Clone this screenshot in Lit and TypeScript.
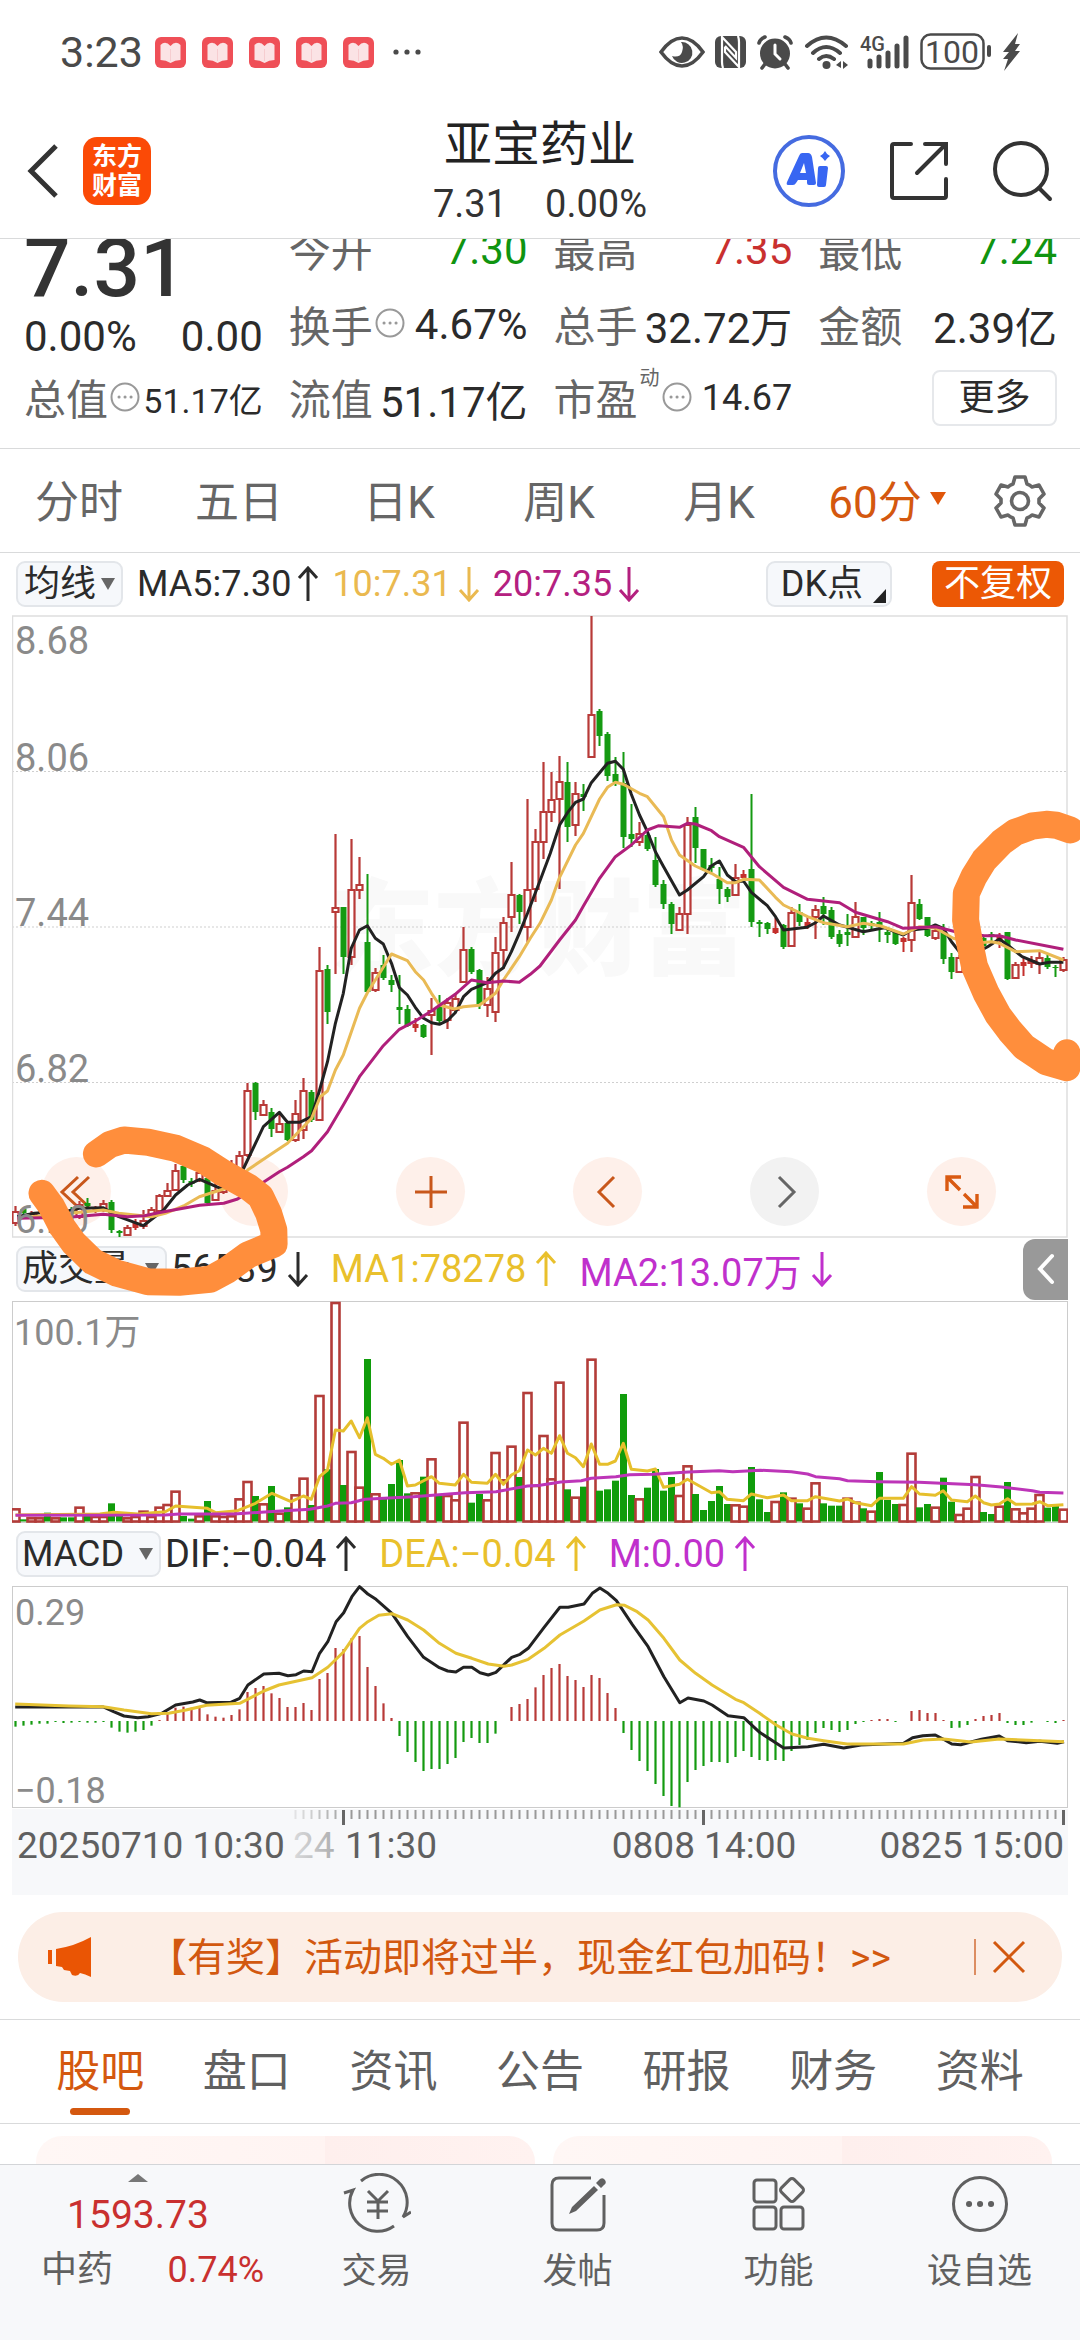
import { LitElement, html, svg, css } from "lit";
import { customElement } from "lit/decorators.js";
import { classMap } from "lit/directives/class-map.js";

type Bar = [string, number, number, number, number];

/* One candle per hour: direction (r up, g down, s up with a filled body), high, body top, body bottom, low. */
const CANDLES: Bar[] = [
  ["r", 1206, 1211, 1223, 1226], ["g", 1208, 1209, 1213, 1215], ["r", 1211, 1213, 1218, 1220], ["r", 1208, 1212, 1216, 1219],
  ["g", 1208, 1211, 1216, 1220], ["r", 1206, 1210, 1215, 1218], ["g", 1206, 1209, 1214, 1219], ["g", 1207, 1210, 1214, 1218],
  ["r", 1201, 1204, 1217, 1219], ["g", 1198, 1203, 1206, 1208], ["s", 1206, 1208, 1211, 1213], ["r", 1200, 1203, 1209, 1212],
  ["g", 1200, 1202, 1230, 1233], ["g", 1230, 1231, 1233, 1237], ["r", 1225, 1227, 1235, 1236], ["s", 1219, 1223, 1228, 1230],
  ["r", 1210, 1220, 1226, 1229], ["r", 1207, 1209, 1216, 1217], ["r", 1194, 1195, 1211, 1212], ["r", 1183, 1190, 1196, 1197],
  ["r", 1164, 1170, 1190, 1191], ["g", 1164, 1166, 1180, 1183], ["g", 1178, 1181, 1184, 1187], ["r", 1169, 1172, 1180, 1182],
  ["g", 1176, 1178, 1203, 1204], ["r", 1183, 1190, 1200, 1201], ["r", 1172, 1178, 1192, 1194], ["r", 1160, 1166, 1180, 1182],
  ["r", 1151, 1155, 1173, 1175], ["r", 1083, 1090, 1155, 1157], ["g", 1082, 1083, 1112, 1120], ["r", 1100, 1104, 1115, 1116],
  ["g", 1108, 1112, 1129, 1137], ["r", 1113, 1123, 1132, 1133], ["g", 1121, 1123, 1140, 1141], ["r", 1100, 1113, 1140, 1142],
  ["r", 1078, 1090, 1130, 1139], ["g", 1090, 1092, 1120, 1122], ["r", 947, 970, 1120, 1121], ["g", 965, 969, 1012, 1024],
  ["r", 834, 907, 912, 974], ["g", 907, 907, 957, 974], ["r", 839, 889, 957, 965], ["r", 857, 884, 890, 899],
  ["g", 874, 942, 992, 993], ["r", 968, 972, 990, 992], ["g", 955, 965, 978, 980], ["g", 975, 980, 985, 992],
  ["g", 975, 1007, 1010, 1024], ["g", 1005, 1009, 1026, 1027], ["s", 1018, 1024, 1028, 1032], ["g", 1024, 1025, 1037, 1038],
  ["r", 998, 1010, 1015, 1055], ["g", 995, 1007, 1021, 1024], ["r", 998, 1002, 1020, 1029], ["r", 995, 998, 1010, 1012],
  ["r", 927, 949, 982, 983], ["g", 947, 949, 972, 974], ["g", 969, 970, 1004, 1009], ["r", 977, 988, 1005, 1017],
  ["r", 937, 952, 1012, 1022], ["r", 917, 922, 950, 969], ["r", 862, 894, 917, 932], ["g", 894, 895, 912, 924],
  ["r", 799, 889, 927, 942], ["r", 829, 841, 889, 902], ["r", 762, 811, 842, 859], ["r", 772, 799, 812, 822],
  ["r", 756, 781, 799, 889], ["g", 762, 782, 827, 842], ["r", 782, 793, 825, 836], ["g", 784, 794, 797, 811],
  ["r", 616, 714, 757, 758], ["g", 709, 711, 736, 746], ["g", 732, 734, 776, 781], ["g", 757, 774, 782, 786],
  ["g", 752, 783, 837, 848], ["g", 804, 834, 839, 847], ["r", 822, 833, 842, 846], ["g", 834, 835, 849, 851],
  ["g", 837, 860, 885, 887], ["g", 880, 884, 904, 909], ["g", 902, 904, 924, 934], ["r", 907, 913, 930, 931],
  ["r", 817, 824, 914, 934], ["g", 807, 817, 848, 863], ["g", 849, 849, 870, 871], ["g", 858, 865, 868, 872],
  ["g", 867, 879, 889, 904], ["g", 887, 889, 897, 902], ["r", 864, 877, 895, 896], ["s", 870, 874, 878, 879],
  ["g", 794, 869, 922, 927], ["g", 920, 922, 924, 937], ["g", 922, 923, 929, 934], ["s", 918, 928, 933, 934],
  ["g", 924, 925, 947, 949], ["r", 907, 912, 946, 947], ["g", 904, 912, 922, 926], ["s", 917, 922, 927, 929],
  ["r", 905, 909, 917, 939], ["g", 897, 906, 914, 925], ["g", 907, 910, 937, 939], ["g", 930, 934, 944, 947],
  ["g", 914, 932, 935, 946], ["r", 902, 916, 937, 938], ["g", 917, 917, 928, 935], ["g", 921, 923, 926, 929],
  ["g", 912, 922, 927, 942], ["g", 928, 932, 935, 943], ["g", 931, 932, 944, 945], ["s", 937, 938, 942, 952],
  ["r", 875, 902, 940, 952], ["g", 899, 904, 919, 920], ["g", 917, 917, 936, 937], ["r", 927, 930, 938, 940],
  ["g", 924, 932, 959, 964], ["g", 953, 957, 972, 979], ["r", 955, 957, 972, 973], ["r", 948, 952, 962, 966],
  ["r", 938, 942, 952, 956], ["g", 935, 938, 946, 950], ["g", 932, 934, 937, 944], ["s", 933, 936, 940, 948],
  ["g", 932, 932, 979, 980], ["r", 962, 964, 978, 979], ["s", 958, 962, 966, 976], ["r", 956, 960, 963, 968],
  ["r", 952, 957, 964, 974], ["g", 955, 958, 967, 969], ["g", 965, 967, 968, 977], ["r", 957, 959, 970, 972],
];

/* Volume bars: direction and depth of the bar's top below the panel, in thirds of a unit. */
const VOLUME =
  "r805 g838 r832 r832 g818 r832 g832 g832 r800 g828 r828 r828 g790 g828 r832 r828 r812 r828 r800 r792 r752 g828 g836 r826 g783 r826 r828 r826 r775 r723 g768 r790 g738 r818 g802 r763 r713 g795 r465 g688 r186 g735 r633 r740 g357 r760 g775 g732 g660 g760 r757 g710 r655 g765 r765 r778 r545 g788 g762 r778 r636 r718 r617 g711 r456 r735 r585 r715 r425 g748 r770 g740 r356 g752 g748 g722 g462 g765 r775 g743 g687 g752 g711 r765 r676 g762 g810 g783 g738 g792 r793 r797 g681 g778 g816 r783 g757 r773 g790 r803 r727 g790 g797 g797 r773 r785 g805 r812 g696 g780 g792 r792 r638 g802 g792 r800 g713 g785 r822 r803 r708 g816 g822 r797 g726 r805 r817 r803 r762 g803 g797 r806".split(" ");

/* MACD histogram ends; 453 is the zero line. */
const HISTO = [
  470, 467, 464, 461, 461, 456, 459, 458, 456, 458, 458, 456, 473, 485, 488, 485, 480, 467, 450, 430, 413, 410, 413, 413, 433, 440,
  443, 435, 418, 366, 354, 348, 370, 384, 411, 411, 399, 420, 327, 309, 234, 237, 205, 198, 291, 348, 400, 444, 498, 546, 576, 603,
  597, 597, 582, 564, 516, 504, 519, 519, 491, 453, 411, 402, 387, 352, 315, 294, 282, 318, 330, 351, 315, 324, 369, 414, 489, 540,
  573, 603, 642, 678, 708, 712, 636, 600, 588, 576, 576, 579, 561, 543, 561, 570, 573, 570, 573, 543, 525, 510, 489, 474, 480, 486,
  480, 462, 456, 450, 447, 447, 456, 453, 423, 420, 429, 429, 450, 474, 473, 465, 447, 438, 435, 429, 459, 465, 465, 458, 453, 456,
  459, 450,
];

const STEP = 8;
const slot = (i: number) => 15.5 + i * STEP;

/* Turns a run of "x,y" samples into drawing units. */
const run = (ox: number, oy: number, data: string, sx = 2.904) =>
  data
    .split(" ")
    .map((p) => {
      const [x, y] = p.split(",").map(Number);
      return `${(ox + x / sx).toFixed(1)},${(oy + y / 3).toFixed(1)}`;
    })
    .join(" ");

const MA5 = [
  run(0, 930, "50,860 100,850 200,842 230,835 300,833 345,860 416,887 475,840 510,795 545,765 580,748 640,775 690,760 705,720 765,590 811,547 835,577 870,577 905,560 928,480 951,395 974,280 997,190 1020,55 1044,0 1067,-13 1090,25 1113,42 1137,100 1160,173 1183,195 1206,232 1230,265 1253,278 1276,283 1299,272 1322,248 1346,200 1369,178 1415,158 1439,130 1462,113 1485,65 1508,10 1532,-50"),
  run(540, 600, "0,842 30,760 57,675 80,638 103,607 126,597 149,548 196,490 219,484 242,508 265,583 289,645 312,695 335,755 359,800 405,885 428,870 475,830 498,797 521,783 544,825 568,845 591,843 614,877 660,917 684,950 707,990 775,982 800,968 823,948 870,975 939,995 1000,983 1055,1005 1079,990 1125,985 1148,975 1171,985"),
  run(540, 900, "1195,125 1218,155 1240,165 1265,160 1300,140 1334,117 1358,135 1400,170 1451,192 1480,187 1520,187"),
].join(" ");
const MA10 = [
  run(0, 930, "50,865 200,850 300,840 345,850 440,860 480,850 533,828 579,800 640,780 690,765 719,720 788,672 835,640 905,565 930,500 951,483 974,420 997,375 1044,235 1067,188 1137,72 1183,92 1206,125 1230,150 1253,190 1276,225 1320,237 1346,230 1392,226 1439,190 1462,150 1508,80 1540,25"),
  run(540, 600, "0,970 33,900 57,832 103,735 126,700 173,597 196,562 219,547 242,553 289,580 312,590 359,650 382,720 405,765 451,798 498,820 544,848 568,848 591,838 637,840 684,892 707,915 777,950 823,968 893,980 939,970 990,978 1055,1002 1102,980 1150,985"),
  run(540, 900, "1200,115 1260,130 1311,125 1334,130 1381,155 1451,152 1520,180"),
].join(" ");
const MA20 = [
  run(0, 930, "50,865 200,862 300,853 370,860 420,857 460,848 580,826 650,820 690,807 765,757 811,725 835,712 881,680 905,662 951,605 997,525 1044,440 1113,347 1160,298 1206,273 1253,243 1322,193 1369,150 1415,158 1462,153 1508,157 1540,133"),
  run(540, 900, "0,198 57,120 103,60"),
  run(540, 600, "126,918 173,835 219,770 265,735 312,690 345,677 405,682 428,670 451,672 498,692 521,710 591,742 637,800 707,862 777,898 870,908 916,937 1009,965 1055,985 1150,980 1218,998"),
  run(540, 900, "1290,107 1334,107 1381,120 1520,148"),
].join(" ");
const VMA1 = [
  run(0, 1240, "45,825 290,822 330,817 400,822 480,815 510,798 602,805 626,818 690,812 742,790 790,760 845,785 881,768 904,778 928,710 951,690 974,570 997,573 1020,543 1044,593 1067,533 1090,643 1113,655 1137,673 1160,660 1183,738 1206,735 1253,710 1276,730 1322,735 1346,703 1369,727 1415,730 1439,703 1462,733 1485,705 1508,692 1532,630 1555,645"),
  run(540, 1240, "10,625 33,640 57,587 80,640 103,653 126,680 149,612 173,673 196,673 219,663 242,610 265,688 312,693 335,687 359,742 405,733 428,718 498,758 521,755 544,778 591,782 614,762 660,773 707,765 730,782 777,782 800,770 870,783 893,777 916,788 963,797 986,775 1055,775 1079,740 1102,762 1148,766 1171,752 1195,780 1241,785 1264,768 1288,788 1311,795 1334,792 1358,776 1381,793 1430,792 1451,785 1474,797 1520,794"),
].join(" ");
const VMA2 = [
  run(0, 1240, "45,826 480,825 520,822 680,822 780,815 900,808 951,798 974,790 1020,788 1060,778 1200,770 1350,758 1440,755 1532,738"),
  run(540, 1240, "0,736 60,726 120,722 149,715 220,710 260,704 330,703 430,696 520,692 560,695 640,691 730,695 777,702 800,710 870,716 893,722 980,725 1100,727 1265,734 1340,741 1430,752 1451,757 1520,759"),
].join(" ");
const DIF = run(0, 1570, "22,411 150,411 165,425 180,438 200,443 215,440 235,430 255,405 280,396 290,390 300,398 335,397 348,385 360,345 383,312 405,310 418,317 430,314 441,303 453,305 464,250 476,215 488,155 499,128 511,80 522,50 534,72 546,88 569,130 592,200 615,262 638,293 650,303 662,306 673,292 685,292 697,308 709,315 720,307 743,262 755,253 767,235 790,172 813,112 825,112 848,102 860,70 871,54 883,70 895,92 918,163 941,230 964,320 987,398 999,384 1022,393 1034,405 1057,437 1080,443 1103,487 1138,534 1173,530 1196,523 1225,534 1250,525 1312,520 1325,503 1340,497 1358,495 1370,508 1382,522 1395,524 1425,508 1451,498 1463,512 1490,518 1510,514 1535,520 1545,515", 1.452);
const DEA = run(0, 1570, "22,402 100,408 150,410 180,420 220,431 245,430 270,420 300,406 348,400 383,363 405,345 453,323 476,292 499,245 522,175 534,155 550,136 569,131 592,150 615,180 638,220 662,250 685,265 709,282 732,289 743,285 767,268 790,235 813,195 848,153 871,120 895,104 907,106 925,125 941,150 964,205 987,270 1010,310 1034,345 1068,388 1080,398 1103,430 1127,465 1150,492 1173,505 1196,512 1230,522 1312,522 1340,510 1370,507 1410,516 1451,507 1545,515", 1.452);

const MARK_LEFT = run(0, 930, "280,672 320,643 360,630 430,637 510,655 590,690 650,730 720,770 757,800 780,850 795,900 796,942 720,975 660,1020 610,1048 520,1057 430,1055 340,1030 270,995 215,940 180,890 150,830 122,790");
const MARK_RIGHT =
  run(540, 600, "1540,690 1500,676 1470,673 1430,678 1380,697 1340,727 1290,780 1260,830 1238,880 1236,960 1246,1020") +
  " " +
  run(540, 900, "1262,200 1295,278 1330,345 1365,393 1405,440 1470,485 1530,503 1530,458");

const arrow = (dir: "up" | "down") => html`<svg class="arrow" viewBox="0 0 22 36" aria-hidden="true">
  ${dir === "up"
    ? svg`<path d="M11 35V2M2 12l9-10 9 10" />`
    : svg`<path d="M11 1v33M2 24l9 10 9-10" />`}
</svg>`;

const hint = html`<svg class="hint" viewBox="0 0 30 30" aria-hidden="true">
  <circle cx="15" cy="15" r="13.5" /><path d="M9 15h.1M15 15h.1M21 15h.1" />
</svg>`;

@customElement("app-root")
export class AppRoot extends LitElement {
  static styles = css`
    :host {
      display: block;
      font-family: Roboto, "Noto Sans CJK SC", sans-serif;
      color: #2b2b2b;
      background: #fff;
    }
    * { box-sizing: border-box; }
    svg { display: block; flex: none; fill: none; }
    button, select {
      font: inherit; color: inherit; background: none; border: 0; padding: 0; margin: 0;
    }
    a { color: inherit; text-decoration: none; }
    .page { display: flex; flex-direction: column; min-height: 100vh; overflow: hidden; }
    .status {
      display: flex; align-items: center; justify-content: space-between;
      height: 104px; padding: 0 60px; color: #4a4a4a;
    }
    .status-side { display: flex; align-items: center; }
    .clock { font-size: 43px; line-height: 50px; margin-right: 12px; }
    .notices { display: flex; gap: 16px; margin-right: 19px; }
    .status-icons { gap: 10px; }
    .w31 { width: 31px; height: 31px; }

    .header {
      display: grid; grid-template-columns: 1fr auto 1fr; align-items: center;
      height: 135px; padding: 0 26px; border-bottom: 1px solid #d9dadb;
    }
    .header-left { display: flex; align-items: center; gap: 24px; }
    .logo {
      display: flex; flex-direction: column; justify-content: center; align-items: center;
      width: 68px; height: 68px; border-radius: 14px; background: #fb4a06; color: #fff;
      font-size: 25px; line-height: 29px; font-weight: 700;
    }
    .header-title { text-align: center; padding-top: 6px; }
    .name { margin: 0; font-size: 48px; line-height: 60px; font-weight: 400; color: #222; }
    .sub { display: flex; gap: 38px; justify-content: center; font-size: 38px; line-height: 58px; color: #333; }
    .header-right { display: flex; justify-content: flex-end; align-items: center; gap: 43px; }

    .quote {
      height: 210px; padding: 0 23px 0 24px; overflow: hidden; border-bottom: 1px solid #d9dadb;
    }
    .quote-grid {
      display: grid; grid-template-columns: repeat(4, minmax(0, 1fr)); grid-template-rows: 75px 75px 72px;
      column-gap: 26px; margin-top: -27px; font-size: 42px;
    }
    .price { grid-row: span 2; display: flex; flex-direction: column; justify-content: flex-end; padding-bottom: 1px; }
    .price-now { font-size: 82px; line-height: 76px; padding-bottom: 6px; font-weight: 500; color: #333; }
    .cell { display: flex; align-items: center; justify-content: space-between; white-space: nowrap; }
    .key { display: flex; align-items: center; color: #666; padding-bottom: 3px; }
    .sup { align-self: flex-start; font-size: 20px; line-height: 24px; margin-left: 2px; }
    .small { font-size: 34px; }
    .mid { font-size: 36px; }
    .up { color: #c9302f; }
    .down { color: #109410; }
    .hint { width: 30px; height: 30px; margin-left: 2px; stroke: #999; stroke-width: 2; }
    .hint path { stroke-width: 3; stroke-linecap: round; }
    .more {
      justify-self: end; align-self: center; width: 125px; height: 56px; border: 2px solid #e6e8eb;
      border-radius: 8px; font-size: 36px; line-height: 48px;
    }
    .periods {
      display: grid; grid-template-columns: repeat(6, 1fr) 120px; align-items: center; height: 104px;
      border-bottom: 1px solid #d9dadb; font-size: 44px; color: #666;
    }
    .period { display: flex; align-items: center; justify-content: center; gap: 8px; white-space: nowrap; padding: 0 2px 4px 0; }
    .active { color: #d4580f; }
    .active.period { padding-left: 16px; }
    .settings { display: flex; justify-content: center; }

    .charts { position: relative; padding: 0 12px; }
    .plot { width: 100%; height: auto; overflow: hidden; position: relative; pointer-events: none; }
    .legend {
      display: flex; align-items: center; height: 62px; padding-left: 4px; font-size: 38px; white-space: nowrap;
    }
    .legend.compact { font-size: 36px; }
    .item { display: flex; align-items: center; gap: 9px; margin-right: 22px; }
    .compact .item { gap: 6px; margin-right: 13px; }
    .arrow { width: 22px; height: 36px; stroke: currentColor; stroke-width: 3; }
    .gold { color: #e9c02c; }
    .amber { color: #eab94f; }
    .plum { color: #b4207f; }
    .violet { color: #c030cc; }
    .pick {
      display: flex; align-items: center; height: 46px; margin-right: 4px; padding: 0 6px; gap: 4px;
      border: 2px solid #e3e6ea; border-radius: 9px; background: #f6f8fb; font-size: 36px; line-height: 42px;
    }
    .pick.wide { gap: 14px; padding-left: 4px; }
    .compact .pick { margin-right: 14px; }
    .pick select { appearance: none; line-height: 42px; height: 42px; }
    .spacer { flex: 1; }
    .dk {
      display: flex; height: 46px; align-items: center; padding: 0 4px 0 13px; gap: 10px; border: 2px solid #e3e6ea;
      border-radius: 9px; background: #f6f8fb; margin-right: 40px; line-height: 42px;
    }
    .dk-corner { align-self: flex-end; margin-bottom: 2px; }
    .fq {
      height: 46px; padding: 0 12px; margin-right: 4px; border-radius: 8px; background: #ec5805; color: #fff; line-height: 46px;
    }
    .collapse {
      display: flex; align-items: center; justify-content: center; width: 45px; height: 61px;
      border-radius: 12px 0 0 12px; background: #999;
    }
    .kline { position: relative; }
    .controls {
      position: absolute; inset: auto 0 12px 0; display: flex; justify-content: space-between; padding: 0 72px 0 30px;
    }
    .round {
      display: flex; align-items: center; justify-content: center; width: 69px; height: 69px; border-radius: 50%;
      background: #fef0ea;
    }
    .round.off { background: #f2f2f2; }
    .marks { position: absolute; left: 0; top: 0; width: 100%; height: auto; pointer-events: none; }

    .banner {
      display: flex; align-items: center; height: 90px; margin: 17px 18px; padding: 0 36px 0 28px; border-radius: 45px;
      background: #fceee6; color: #d2580f; font-size: 39px; white-space: nowrap;
    }
    .banner-text { margin-left: 54px; padding-bottom: 6px; flex: 1; }
    .bar { width: 2px; height: 36px; background: #dc8d62; margin-right: 16px; }

    .tabs {
      display: grid; grid-template-columns: repeat(7, 1fr); height: 105px; padding: 0 27px;
      border-top: 1px solid #d9dadb; border-bottom: 1px solid #d9dadb; font-size: 44px; color: #606060;
    }
    .tab { display: flex; flex-direction: column; align-items: center; justify-content: flex-end; gap: 4px; padding-bottom: 8px; line-height: 64px; }
    .tab::after { content: ""; width: 60px; height: 7px; border-radius: 4px; }
    .tab.active::after { background: #d4580f; }
    .cards {
      flex: 1; display: grid; grid-template-columns: 1fr 1fr; gap: 18px; padding: 12px 28px 0 36px; min-height: 40px;
    }
    .card { border-radius: 26px 26px 0 0; background: linear-gradient(90deg, #fff7f5, #fff4f2 58%, #feefed 58%, #fff2f0); }

    .nav {
      display: grid; grid-template-columns: 276px repeat(4, 1fr); height: 176px; border-top: 1px solid #d3d5d8;
      background: #f7f8fa; color: #606060; font-size: 36px;
    }
    .sector { display: flex; flex-direction: column; align-items: center; padding-top: 9px; }
    .index { font-size: 39px; line-height: 44px; margin-top: 11px; }
    .sector-row { display: flex; justify-content: space-between; width: 100%; padding: 0 12px 0 41px; line-height: 44px; margin-top: 11px; font-size: 36px; }
    .nav-item { display: flex; flex-direction: column; align-items: center; padding-top: 8px; gap: 13px; font-size: 35px; line-height: 48px; }
    .nav-item svg { stroke: #606060; stroke-width: 3; }
  `;

  private candle([kind, high, top, bottom, low]: Bar, i: number) {
    const x = slot(i);
    if (kind === "r") {
      return svg`<path stroke="#b83a38" stroke-width="2.2" fill="#fff" d="M${x} ${high}V${top}M${x} ${bottom}V${low}M${x - 3} ${top + 1}h6V${bottom}h-6z"/>`;
    }
    const color = kind === "g" ? "#159a12" : "#c42f2c";
    return svg`<path fill=${color} d="M${x - 1} ${high}h2V${low}h-2zM${x - 3} ${top}h6V${bottom}h-6z"/>`;
  }

  private volume(v: string, i: number) {
    const x = slot(i);
    const y = 1240 + Number(v.slice(1)) / 3;
    return v[0] === "r"
      ? svg`<rect x=${x - 4} y=${y + 1} width="8" height=${1520.5 - y} stroke="#b33c39" stroke-width="2.6" fill="#fff"/>`
      : svg`<rect x=${x - 3.5} y=${y} width="7" height=${1521.5 - y} fill="#109c0b"/>`;
  }

  private line(points: string, color: string, width = 3) {
    return svg`<polyline points=${points} stroke=${color} stroke-width=${width} stroke-linejoin="round"/>`;
  }

  private label(x: number, y: number, text: string, size = 38) {
    return svg`<text x=${x} y=${y} font-size=${size} fill="#8a8a8a">${text}</text>`;
  }

  private triangle() {
    return html`<svg width="14" height="12" viewBox="0 0 14 12" aria-hidden="true"><path d="M0 0h14L7 12z" fill="#666" /></svg>`;
  }

  private statusBar() {
    const book = html`<svg class="w31" viewBox="0 0 31 31">
      <rect width="31" height="31" rx="6" fill="#ef4f57" />
      <path d="M5.500 8q5-5 10 1q5-6 10-1v15q-5.500 0-10 3q-4.500-3-10-3z" fill="#fbe3e5" />
      <path d="M15.500 12v12" stroke="#f6cdd0" stroke-width="1" />
    </svg>`;
    return html`<div class="status">
      <div class="status-side">
        <span class="clock">3:23</span>
        <div class="notices">${[0, 1, 2, 3, 4].map(() => book)}</div>
        <svg width="28" height="6" viewBox="0 0 28 6"><g fill="#4a4a4a"><circle cx="3" cy="3" r="2.600" /><circle cx="14" cy="3" r="2.600" /><circle cx="25" cy="3" r="2.600" /></g></svg>
      </div>
      <div class="status-side status-icons">
        <svg width="46" height="32" viewBox="0 0 46 32">
          <path d="M2 16Q12 2 23 2t21 14Q34 30 23 30T2 16z" stroke="#4a4a4a" stroke-width="3.600" />
          <path d="M22 6a10.500 10.500 0 1 1-9 14q8 2 10-4t-1-10z" fill="#4a4a4a" />
        </svg>
        <svg width="31" height="32" viewBox="0 0 31 32">
          <rect width="31" height="32" rx="6" fill="#4a4a4a" />
          <path d="M8 32q-1-3-1-6V1l14 15v6L10 10M23 0q1 3 1 6v25L10 16v-5" stroke="#fff" stroke-width="2.200" />
        </svg>
        <svg width="38" height="36" viewBox="0 0 38 36">
          <circle cx="19" cy="19.500" r="15" fill="#4a4a4a" />
          <path d="M3 9q1-4 6-6M35 9q-1-4-6-6M9 30l-3 4M29 30l3 4" stroke="#4a4a4a" stroke-width="3.600" stroke-linecap="round" />
          <path d="M19 11v9l5 5" stroke="#fff" stroke-width="3" stroke-linecap="round" />
        </svg>
        <svg width="46" height="36" viewBox="0 0 46 36">
          <g stroke="#4a4a4a" stroke-width="4" stroke-linecap="round">
            <path d="M3 12q19-17 39 0M9 19q13-12 27 0M15 25q7-6 15 0" />
          </g>
          <circle cx="22.500" cy="31" r="4" fill="#4a4a4a" />
          <path d="M37 27v7l-5-3zM39 27v8l5-4z" fill="#4a4a4a" />
        </svg>
        <svg width="50" height="36" viewBox="0 0 50 36">
          <text x="0" y="17" font-size="20" font-weight="500" fill="#4a4a4a">4G</text>
          <path d="M10 27v5M19 23v9M28 19v13M37 12v20M46 4v28" stroke="#4a4a4a" stroke-width="5" stroke-linecap="round" />
        </svg>
        <svg width="72" height="38" viewBox="0 0 72 38">
          <rect x="1.500" y="1.500" width="62" height="34" rx="9" stroke="#4a4a4a" stroke-width="2.500" />
          <text x="32" y="30" text-anchor="middle" font-size="32" fill="#4a4a4a">100</text>
          <path d="M69 14v8" stroke="#4a4a4a" stroke-width="4" stroke-linecap="round" />
        </svg>
        <svg width="18" height="38" viewBox="0 0 18 38"><path d="M16 0L1 19h6L1 26h5L2 38 18 18h-5l5-7h-5z" fill="#4a4a4a" /></svg>
      </div>
    </div>`;
  }

  private header() {
    return html`<header class="header">
      <div class="header-left">
        <button aria-label="返回"><svg width="33" height="56" viewBox="0 0 33 56"><path d="M30 3L5 28l25 25" stroke="#333" stroke-width="5" /></svg></button>
        <a class="logo" href="#home"><span>东方</span><span>财富</span></a>
      </div>
      <div class="header-title">
        <h1 class="name">亚宝药业</h1>
        <div class="sub"><span>7.31</span><span>0.00%</span></div>
      </div>
      <div class="header-right">
        <button aria-label="智能助手">
          <svg width="74" height="74" viewBox="0 0 74 74">
            <circle cx="37" cy="37" r="34" stroke="#456be0" stroke-width="4" />
            <path fill="#3866f2" fill-rule="evenodd" d="M29 19h7q3 0 4 4l4 26q0 2-2 2h-5q-2 0-2-2v-3h-9l-2 3q-1 2-3 2h-5q-2 0-1-3l12-26q1-3 3-3zM32 29l-4 10h6zM48 32h6q2 0 2 2l-2 17q0 2-2 2h-5q-2 0-2-2l1-17q0-2 2-2zM53 17q2 4 5 5q-3 2-5 5q-2-3-5-5q3-1 5-5z" />
          </svg>
        </button>
        <button aria-label="分享">
          <svg width="60" height="60" viewBox="0 0 60 60">
            <path d="M22 3H5q-2 0-2 2v50q0 2 2 2h50q2 0 2-2V38M36 3h21v20M57 3L28 32" stroke="#333" stroke-width="4" stroke-linecap="round" />
          </svg>
        </button>
        <button aria-label="搜索">
          <svg width="62" height="62" viewBox="0 0 62 62"><circle cx="29" cy="29" r="26" stroke="#333" stroke-width="4" /><path d="M47 48l11 11" stroke="#333" stroke-width="4" stroke-linecap="round" /></svg>
        </button>
      </div>
    </header>`;
  }

  private quote() {
    return html`<section class="quote">
      <div class="quote-grid">
        <div class="price">
          <div class="price-now">7.31</div>
          <div class="cell"><span>0.00%</span><span>0.00</span></div>
        </div>
        <div class="cell"><span class="key">今开</span><span class="down">7.30</span></div>
        <div class="cell"><span class="key">最高</span><span class="up">7.35</span></div>
        <div class="cell"><span class="key">最低</span><span class="down">7.24</span></div>
        <div class="cell"><span class="key">换手${hint}</span><span>4.67%</span></div>
        <div class="cell"><span class="key">总手</span><span>32.72万</span></div>
        <div class="cell"><span class="key">金额</span><span>2.39亿</span></div>
        <div class="cell"><span class="key">总值${hint}</span><span class="small">51.17亿</span></div>
        <div class="cell"><span class="key">流值</span><span>51.17亿</span></div>
        <div class="cell"><span class="key">市盈<span class="sup">动</span>${hint}</span><span class="mid">14.67</span></div>
        <button class="more">更多</button>
      </div>
    </section>`;
  }

  private priceChart() {
    return html`<div class="kline">
      <div class="controls">
        <button class="round" aria-label="最早"><svg width="36" height="40" viewBox="0 0 36 40"><path d="M19 5L3 20l16 15M30 5L14 20l16 15" stroke="#c8571b" stroke-width="3" /></svg></button>
        <button class="round" aria-label="缩小"><svg width="36" height="36" viewBox="0 0 36 36"><path d="M2 18h32" stroke="#c8571b" stroke-width="3" /></svg></button>
        <button class="round" aria-label="放大"><svg width="36" height="36" viewBox="0 0 36 36"><path d="M2 18h32M18 2v32" stroke="#c8571b" stroke-width="3" /></svg></button>
        <button class="round" aria-label="向左"><svg width="24" height="36" viewBox="0 0 24 36"><path d="M18 3L3 18l15 15" stroke="#c8571b" stroke-width="3" /></svg></button>
        <button class="round off" aria-label="向右"><svg width="24" height="36" viewBox="0 0 24 36"><path d="M6 3l15 15L6 33" stroke="#666" stroke-width="3" /></svg></button>
        <button class="round" aria-label="全屏"><svg width="36" height="36" viewBox="0 0 36 36"><path d="M3 17V3h14M3 3l13 13M33 20v13H19M33 33L20 20" stroke="#d95a12" stroke-width="3.400" /></svg></button>
      </div>
      <svg class="plot" viewBox="12 615 1056 623" role="img" aria-label="60分K线">
        <text x="330" y="967" font-size="104" font-weight="900" fill="#f9f9f9">东方财富</text>
        <path d="M12 771.500h1056M12 927h1056M12 1082.500h1056" stroke="#cfcfcf" stroke-dasharray="2 2" />
        <rect x="12.500" y="616" width="1054.500" height="621" stroke="#dedede" stroke-width="1.500" />
        ${CANDLES.map((c, i) => this.candle(c, i))}
        ${this.line(MA5, "#222")} ${this.line(MA10, "#e9ba55")} ${this.line(MA20, "#b01f7b")}
        ${this.label(15, 654, "8.68")} ${this.label(15, 771, "8.06")} ${this.label(15, 926, "7.44")}
        ${this.label(15, 1082, "6.82")} ${this.label(15, 1233, "6.20")}
      </svg>
    </div>`;
  }

  private macdChart() {
    const ticks = Array.from({ length: 97 }, (_, k) => k + 35);
    return html`<svg class="plot" viewBox="12 1585 1056 224" role="img" aria-label="MACD">
        <rect x="12.500" y="1586.500" width="1055" height="221" stroke="#ccc" />
        ${HISTO.map((v, i) => svg`<path d="M${slot(i)} 1721V${1570 + v / 3}" stroke=${v < 453 ? "#b83a38" : "#149a10"} stroke-width="2.2"/>`)}
        ${this.line(DIF, "#222")} ${this.line(DEA, "#e6c233", 3)}
        ${this.label(15, 1625, "0.29", 36)} ${this.label(15, 1803, "−0.18", 36)}
      </svg>
      <svg class="plot" viewBox="12 1809 1056 86" role="img" aria-label="时间轴">
        <defs>
          <linearGradient id="fade" gradientUnits="userSpaceOnUse" x1="286" y1="0" x2="345" y2="0">
            <stop offset="0" stop-color="#606060" stop-opacity="0.15" /><stop offset="1" stop-color="#606060" stop-opacity="0.55" />
          </linearGradient>
        </defs>
        <rect x="12" y="1809" width="1056" height="86" fill="#f7f8fa" />
        ${ticks.map((i) => {
          const major = i === 41 || i === 86 || i === 131;
          return svg`<path d="M${slot(i)} 1810V${major ? 1825 : 1819}" stroke=${major ? "#666" : "#999"} stroke-width=${major ? 3 : 2} opacity=${i < 41 ? (i - 33) / 9 : 1}/>`;
        })}
        <g font-size="37" fill="#606060">
          <text x="17" y="1858">20250710 10:30</text>
          <text x="293" y="1858" fill="url(#fade)">24</text>
          <text x="345" y="1858">11:30</text>
          <text x="704" y="1858" text-anchor="middle">0808 14:00</text>
          <text x="1064" y="1858" text-anchor="end">0825 15:00</text>
        </g>
      </svg>`;
  }

  private charts() {
    return html`<section class="charts">
      <div class="legend compact">
        <label class="pick"><select aria-label="主图指标"><option>均线</option></select>${this.triangle()}</label>
        <span class="item">MA5:7.30${arrow("up")}</span>
        <span class="item amber">10:7.31${arrow("down")}</span>
        <span class="item plum">20:7.35${arrow("down")}</span>
        <span class="spacer"></span>
        <button class="dk">DK点<svg class="dk-corner" width="13" height="14" viewBox="0 0 13 14"><path d="M13 0v14H0z" fill="#222" /></svg></button>
        <button class="fq">不复权</button>
      </div>
      ${this.priceChart()}
      <div class="legend">
        <label class="pick wide"><select aria-label="副图一指标"><option>成交量</option></select>${this.triangle()}</label>
        <span class="item">56539${arrow("down")}</span>
        <span class="item gold">MA1:78278${arrow("up")}</span>
        <span class="item violet">MA2:13.07万${arrow("down")}</span>
        <span class="spacer"></span>
        <button class="collapse" aria-label="收起"><svg width="20" height="32" viewBox="0 0 20 32"><path d="M16 3L4 16l12 13" stroke="#fff" stroke-width="4" stroke-linecap="round" /></svg></button>
      </div>
      <svg class="plot" viewBox="12 1300 1056 223" role="img" aria-label="成交量">
        <rect x="12.500" y="1301.500" width="1055" height="221" stroke="#ccc" />
        ${VOLUME.map((v, i) => this.volume(v, i))}
        ${this.line(VMA1, "#e6bf2c")} ${this.line(VMA2, "#bd35b8")}
        ${this.label(14, 1345, "100.1万", 36)}
      </svg>
      <div class="legend">
        <label class="pick wide"><select aria-label="副图二指标"><option>MACD</option></select>${this.triangle()}</label>
        <span class="item">DIF:−0.04${arrow("up")}</span>
        <span class="item gold">DEA:−0.04${arrow("up")}</span>
        <span class="item violet">M:0.00${arrow("up")}</span>
      </div>
      ${this.macdChart()}
      <svg class="marks" viewBox="0 553 1080 800" aria-hidden="true">
        <g stroke="#ff8e3c" stroke-width="27" stroke-linecap="round" stroke-linejoin="round">
          <polyline points=${MARK_LEFT} /><polyline points=${MARK_RIGHT} />
        </g>
      </svg>
    </section>`;
  }

  render() {
    const periods = ["分时", "五日", "日K", "周K", "月K"];
    const tabs = ["股吧", "盘口", "资讯", "公告", "研报", "财务", "资料"];
    return html`<main class="page">
      ${this.statusBar()} ${this.header()} ${this.quote()}
      <nav class="periods">
        ${periods.map((p) => html`<button class="period">${p}</button>`)}
        <button class="period active" aria-haspopup="true">60分<svg width="16" height="13" viewBox="0 0 16 13"><path d="M0 0h16L8 13z" fill="#e0560a" /></svg></button>
        <button class="settings" aria-label="设置">
          <svg width="54" height="54" viewBox="0 0 54 54" stroke="#666" stroke-width="3.600" stroke-linejoin="round">
            <path d="M22 3h10l2 7q3 1 5 3l7-2 5 9-5 5v4l5 5-5 9-7-2q-2 2-5 3l-2 7H22l-2-7q-3-1-5-3l-7 2-5-9 5-5v-4l-5-5 5-9 7 2q2-2 5-3z" />
            <circle cx="27" cy="27" r="8.500" />
          </svg>
        </button>
      </nav>
      ${this.charts()}
      <div class="banner">
        <svg width="48" height="40" viewBox="0 0 48 40"><path d="M2 13h4v14H2zM10 12q19-3 35-12v40q-6-3-11-4q-2 4-8 2l-2-4-6-1-2-3-6-1z" fill="#ea5504" /></svg>
        <a class="banner-text" href="#activity">【有奖】活动即将过半，现金红包加码！&gt;&gt;</a>
        <span class="bar"></span>
        <button aria-label="关闭"><svg width="34" height="34" viewBox="0 0 34 34"><path d="M2 2l30 30M32 2L2 32" stroke="#d2580f" stroke-width="3" /></svg></button>
      </div>
      <nav class="tabs">
        ${tabs.map((t, i) => html`<button class=${classMap({ tab: true, active: i === 0 })}>${t}</button>`)}
      </nav>
      <div class="cards"><div class="card"></div><div class="card"></div></div>
      <nav class="nav">
        <a class="sector" href="#sector">
          <svg width="20" height="8" viewBox="0 0 20 8"><path d="M10 0l10 8H0z" fill="#777" /></svg>
          <span class="index up">1593.73</span>
          <span class="sector-row"><span>中药</span><span class="up">0.74%</span></span>
        </a>
        <a class="nav-item" href="#trade">
          <svg width="68" height="62" viewBox="0 0 68 62">
            <path d="M18 8A28 28 0 0 1 60 44l8-5M1 20l9-3A28 28 0 0 0 51 53" />
            <path d="M25 18l10 10 10-10M24 29h21M24 38h21M35 28v18" />
          </svg>交易
        </a>
        <a class="nav-item" href="#post">
          <svg width="60" height="62" viewBox="0 0 60 62">
            <path d="M43 5H11q-7 0-7 7v38q0 7 7 7h38q7 0 7-7V22" />
            <path d="M46 13l4 4-22 21-7 3 3-7zM48 10l4-4q3-2 5 1t-1 5l-3 3z" fill="#606060" stroke="none" />
          </svg>发帖
        </a>
        <a class="nav-item" href="#tools">
          <svg width="60" height="62" viewBox="0 0 60 62">
            <rect x="5" y="7" width="22" height="22" rx="3" /><rect x="5" y="34" width="22" height="22" rx="3" /><rect x="32" y="34" width="22" height="22" rx="3" />
            <rect x="34" y="8" width="18" height="18" rx="3" transform="rotate(45 43 17)" />
          </svg>功能
        </a>
        <a class="nav-item" href="#watch">
          <svg width="60" height="62" viewBox="0 0 60 62">
            <circle cx="30" cy="31" r="26.500" /><path d="M19 31h.1M30 31h.1M41 31h.1" stroke-width="6" stroke-linecap="round" />
          </svg>设自选
        </a>
      </nav>
    </main>`;
  }
}
